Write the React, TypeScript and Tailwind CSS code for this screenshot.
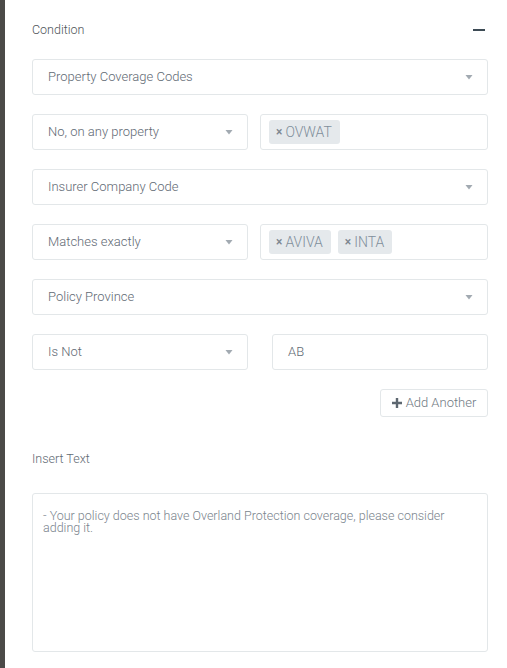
import React from "react";

function Caret() {
  return (
    <svg width="8" height="5" viewBox="0 0 8 5" className="shrink-0">
      <path d="M0.5 0 L7.5 0 L4 4.5 Z" fill="#a2aab1" />
    </svg>
  );
}

function Select({ label, className = "" }: { label: string; className?: string }) {
  return (
    <div
      className={`h-[36px] flex items-center justify-between pl-[15px] pr-[14px] border border-[#e3e7e9] rounded-[3px] bg-white text-[13px] font-light text-[#5f6a74] ${className}`}
    >
      <span>{label}</span>
      <Caret />
    </div>
  );
}

function Tag({ text }: { text: string }) {
  return (
    <span className="h-[24px] flex items-center gap-[3px] pl-[7px] pr-[8px] rounded-[3px] bg-[#e5e9ec] text-[14px] font-light text-[#7f8e9b]">
      <span className="text-[12px] text-[#7d8790] font-medium">×</span>
      {text}
    </span>
  );
}

function TagBox({ tags }: { tags: string[] }) {
  return (
    <div className="flex-1 h-[36px] flex items-center gap-[7px] pl-[8px] border border-[#e3e7e9] rounded-[3px] bg-white">
      {tags.map((t) => (
        <Tag key={t} text={t} />
      ))}
    </div>
  );
}

export default function App() {
  return (
    <div
      className="flex min-h-[668px] bg-white"
      style={{ fontFamily: "Roboto, 'Liberation Sans', sans-serif" }}
    >
      <div className="w-[5px] shrink-0 bg-[#4b4a48]" />
      <div className="flex-1 pl-[27px] pr-[19px] pt-[21px]">
        {/* Header */}
        <div className="h-[18px] flex items-center justify-between">
          <span className="text-[12.5px] font-light text-[#4f555a]">Condition</span>
          <span className="w-[12px] h-[2px] bg-[#3d4b55] mr-[3px]" />
        </div>

        <div className="mt-[20px] flex flex-col gap-[19px]">
          <Select label="Property Coverage Codes" />
          <div className="flex gap-[12px]">
            <Select label="No, on any property" className="w-[216px]" />
            <TagBox tags={["OVWAT"]} />
          </div>
          <Select label="Insurer Company Code" />
          <div className="flex gap-[12px]">
            <Select label="Matches exactly" className="w-[216px]" />
            <TagBox tags={["AVIVA", "INTA"]} />
          </div>
          <Select label="Policy Province" />
          <div className="flex gap-[24px]">
            <Select label="Is Not" className="w-[216px]" />
            <div className="flex-1 h-[36px] flex items-center pl-[15px] border border-[#e3e7e9] rounded-[3px] text-[13px] font-light text-[#5f6a74]">
              AB
            </div>
          </div>
          <div className="flex justify-end">
            <button className="h-[28px] w-[108px] flex items-center justify-center gap-[4px] border border-[#e3e7e9] rounded-[3px] bg-white text-[13px] font-light text-[#6f7982]">
              <svg width="10" height="10" viewBox="0 0 10 10">
                <path d="M3.8 0 H6.2 V3.8 H10 V6.2 H6.2 V10 H3.8 V6.2 H0 V3.8 H3.8 Z" fill="#5d6770" />
              </svg>
              Add Another
            </button>
          </div>
        </div>

        <div className="mt-[33px] h-[18px] flex items-center text-[12.5px] font-light text-[#5f6a74]">
          Insert Text
        </div>

        <div className="mt-[25px] h-[159px] border border-[#e3e7e9] rounded-[3px] px-[10px] pt-[16px] text-[12.5px] leading-[12px] text-[#7a848d] font-light">
          - Your policy does not have Overland Protection coverage, please consider adding it.
        </div>
      </div>
    </div>
  );
}
